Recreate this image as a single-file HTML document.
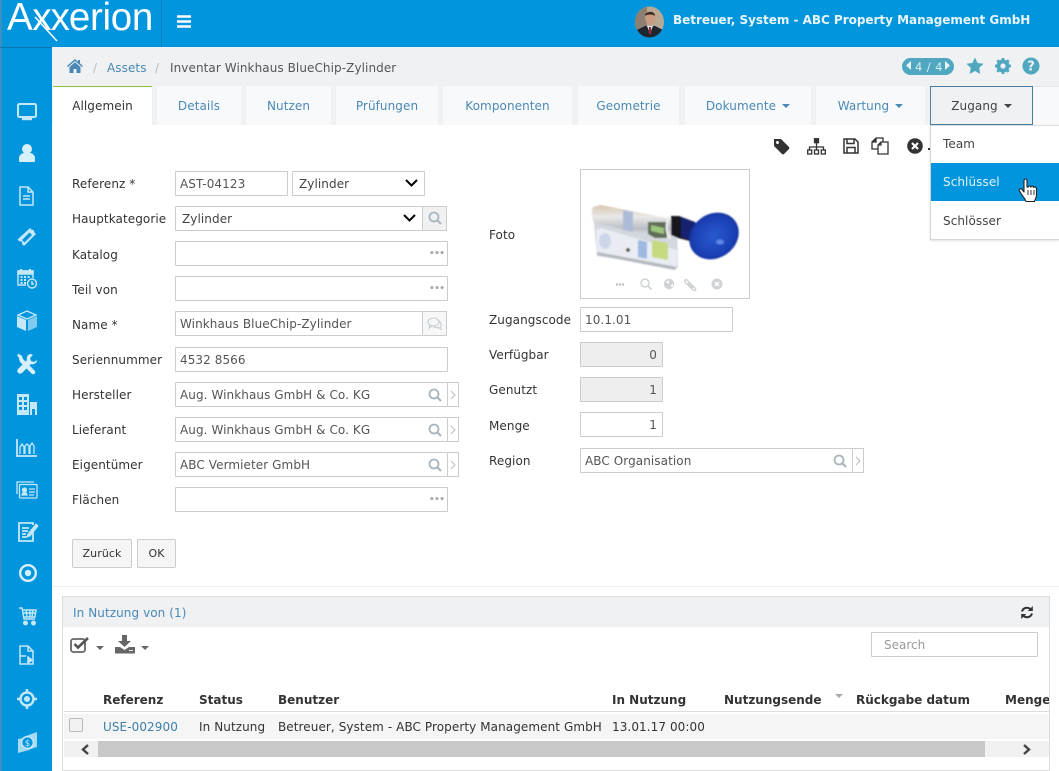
<!DOCTYPE html>
<html lang="de"><head><meta charset="utf-8"><title>Axxerion</title>
<style>
*{box-sizing:border-box}
html,body{margin:0;padding:0;width:1059px;height:771px;overflow:hidden;background:#fff;font:12px/16px "DejaVu Sans","Liberation Sans",sans-serif;color:#333;letter-spacing:.08px}
.a{position:absolute}
.t{position:absolute;white-space:nowrap}
.lb{position:absolute;white-space:nowrap;left:72px;color:#333}
.in{position:absolute;height:25px;border:1px solid #ccc;background:#fff;color:#555;line-height:25px;padding-left:4px;white-space:nowrap;border-radius:1px}
.tab{position:absolute;top:86px;height:39px;background:#f8f9fa;color:#4a89b5;text-align:center;line-height:41px;white-space:nowrap}
.car{display:inline-block;width:0;height:0;border-left:4px solid transparent;border-right:4px solid transparent;border-top:4px solid currentColor;vertical-align:2px;margin-left:6px}
.add{position:absolute;background:#fff;border:1px solid #ccc;border-left:0;height:25px}
.btn{position:absolute;top:539px;height:29px;background:#f5f5f5;border:1px solid #ccc;border-radius:2px;text-align:center;line-height:28px;color:#333;font-size:11px}
svg{position:absolute;display:block}
.th{position:absolute;top:692px;font-weight:bold;color:#333;white-space:nowrap;letter-spacing:0}
.td{position:absolute;top:719px;color:#333;white-space:nowrap}
</style></head><body>

<!-- sidebar + topbar -->
<div class="a" style="left:0;top:0;width:1059px;height:47px;background:#0095dd"></div>
<div class="a" style="left:0;top:0;width:52px;height:771px;background:#0095dd"></div>
<div class="a" style="left:0;top:0;width:2px;height:771px;background:#3f8fc0"></div>
<div class="a" style="left:0;top:47px;width:52px;height:1px;background:#0a77b2"></div>
<div class="a" style="left:161px;top:0;width:1px;height:47px;background:#0a7fbd"></div>

<!-- logo -->
<div class="t" style="left:7px;top:-7px;font:300 38.500px/50px 'Liberation Sans',sans-serif;color:#fff;letter-spacing:-.3px">A<span style="letter-spacing:-1px">xx</span>erion</div>
<svg style="left:30px;top:15px" width="30" height="28" viewBox="0 0 30 28"><path d="M5 2L27 26" stroke="#fff" stroke-width="1.500" fill="none"/></svg>

<!-- hamburger -->
<svg style="left:177px;top:15px" width="15" height="14" viewBox="0 0 15 14"><path d="M0 1.500h14M0 6.500h14M0 11.500h14" stroke="#fff" stroke-width="2.400"/></svg>

<!-- avatar -->
<svg style="left:635px;top:6px" width="30" height="32" viewBox="0 0 30 32">
<defs><clipPath id="av"><ellipse cx="14.500" cy="16" rx="14.500" ry="15.500"/></clipPath></defs>
<g clip-path="url(#av)"><rect width="30" height="32" fill="#b9a894"/><rect x="0" width="12" height="32" fill="#8d8073"/>
<path d="M2 32V24l8-4h10l8 4v8z" fill="#1c2530"/><path d="M12 20h6l-3 8z" fill="#e9e6e4"/><path d="M14 21h2l.5 6-1.500 2-1.500-2z" fill="#8a2f3a"/>
<ellipse cx="15" cy="12" rx="5" ry="6.500" fill="#c99b80"/><path d="M10 10c0-5 10-6 10 0-2-2-8-2-10 0z" fill="#3a2a20"/></g></svg>
<div class="t" style="left:673px;top:12px;font-weight:bold;color:#e8f5fc;letter-spacing:-.02px">Betreuer, System - ABC Property Management GmbH</div>

<!-- sidebar icons -->
<svg style="left:16px;top:102px" width="22" height="20" viewBox="0 0 22 20" fill="none" stroke="#c4e8f8"><rect x="2" y="2" width="18" height="13" rx="1.500" stroke-width="2"/><path d="M6 17h10" stroke-width="2.400"/></svg>
<svg style="left:17px;top:143px" width="20" height="20" viewBox="0 0 20 20" fill="#d5effb"><circle cx="10" cy="6" r="5"/><path d="M2 18v-3c0-3 3-5 5-5h6c2 0 5 2 5 5v3c0 .5-.5 1-1 1H3c-.5 0-1-.5-1-1z"/></svg>
<svg style="left:18px;top:186px" width="18" height="20" viewBox="0 0 18 20" fill="none" stroke="#c4e8f8" stroke-width="1.500"><path d="M2 1h8l5 5v13H2zM10 1v5h5M5 10h7M5 13h7"/></svg>
<svg style="left:16px;top:226px" width="22" height="22" viewBox="0 0 22 22" fill="#c4e8f8"><path d="M14 2l2 2c1-.8 2.800 1 2 2l2 2L8 20l-2-2c.8-1.500-1-3.300-2.500-2.500L1.500 13.500zM13.500 6.500L6 14l2.500 2.500L16 9z" fill-rule="evenodd"/></svg>
<svg style="left:16px;top:267px" width="23" height="23" viewBox="0 0 23 23" fill="none" stroke="#c4e8f8" stroke-width="1.400"><path d="M2 4h15v7M2 4v14h8"/><path d="M2 4h15v3H2z" fill="#c4e8f8"/><path d="M5 2v3M14 2v3" stroke-width="2"/><path d="M4.500 10h2m1.500 0h2m1.500 0h2M4.500 13h2m1.500 0h2M4.500 16h2m1.500 0h2" stroke-width="2"/><circle cx="16" cy="16.500" r="4.500"/><path d="M16 14v3h2"/></svg>
<svg style="left:16px;top:310px" width="22" height="22" viewBox="0 0 22 22" fill="#c4e8f8"><path d="M11 1l9 4-9 4-9-4z" fill="none" stroke="#c4e8f8" stroke-width="1.300"/><path d="M1 6l9 4v11l-9-4z"/><path d="M12 10l9-4v11l-9 4z" fill="#7fcbee"/></svg>
<svg style="left:16px;top:353px" width="22" height="22" viewBox="0 0 22 22" fill="#d5effb"><path d="M3 5L1 2l2-1 3 2 1 3 12 12c1 2-1 4-3 3L4 9 3 6z"/><path d="M15 1c-3 0-5 3-4 6L2 16c-2 3 1 6 4 4l9-9c3 1 6-1 6-4l-3 2-3-1-1-3 3-3z"/></svg>
<svg style="left:16px;top:393px" width="22" height="23" viewBox="0 0 22 23"><path d="M1 1h12v21H1z" fill="#c4e8f8"/><path d="M3 4h3v3H3zM8 4h3v3H8zM3 9h3v3H3zM8 9h3v3H8zM3 14h3v3H3zM8 14h3v3H8z" fill="#0095dd"/><path d="M14 9h7v13h-2v-6h-3v6h-2z" fill="#c4e8f8"/></svg>
<svg style="left:16px;top:438px" width="22" height="20" viewBox="0 0 22 20" fill="none" stroke="#c4e8f8" stroke-width="1.300"><path d="M1 1v17h20" stroke-width="1.800"/><path d="M4 16V9l2-3 2 3v7M9 16V8l2-2 2 2v8M14 16V8l2-3 2 3v8"/></svg>
<svg style="left:16px;top:480px" width="22" height="20" viewBox="0 0 22 20" fill="none" stroke="#c4e8f8" stroke-width="1.300"><path d="M1 14V2h17"/><rect x="3.500" y="4.500" width="17.500" height="13.500" rx="1"/><circle cx="8.500" cy="10" r="2" fill="#c4e8f8"/><path d="M6 15c0-3 5-3 5 0z" fill="#c4e8f8"/><path d="M13 9h6M13 12h6M13 15h5"/></svg>
<svg style="left:17px;top:521px" width="22" height="22" viewBox="0 0 22 22" fill="none" stroke="#c4e8f8" stroke-width="1.800"><path d="M16 9v11H2V2h14v2M5 7h7M5 10h6M5 13h4M5 16h5"/><path d="M19 3l-8 10-1 3 3-1 8-10z" fill="#c4e8f8" stroke-width="1"/></svg>
<svg style="left:18px;top:563px" width="20" height="20" viewBox="0 0 20 20" fill="none"><circle cx="10" cy="10" r="7.800" stroke="#d5effb" stroke-width="2.400"/><circle cx="10" cy="10" r="3.200" fill="#d5effb"/></svg>
<svg style="left:18px;top:606px" width="20" height="20" viewBox="0 0 20 20" fill="none" stroke="#c4e8f8" stroke-width="1.400"><path d="M1 2h3l2 11h11M5 4h13l-1 7H6M8 4l1 7M12 4v7M15 4l-1 7M5 7h13"/><circle cx="7.500" cy="17" r="1.800" fill="#c4e8f8"/><circle cx="15.500" cy="17" r="1.800" fill="#c4e8f8"/></svg>
<svg style="left:18px;top:645px" width="18" height="21" viewBox="0 0 18 21" fill="none" stroke="#c4e8f8" stroke-width="1.500"><path d="M2 1h8l5 5v13H2zM10 1v5h5M2 11h6"/><path d="M10 12l4 3-4 3z" fill="#c4e8f8"/></svg>
<svg style="left:16px;top:688px" width="22" height="22" viewBox="0 0 22 22" fill="none" stroke="#c4e8f8"><circle cx="11" cy="11" r="6.500" stroke-width="2.400"/><circle cx="11" cy="11" r="2.500" fill="#c4e8f8"/><path d="M11 1v4M11 17v4M1 11h4M17 11h4" stroke-width="2.400"/></svg>
<svg style="left:17px;top:731px" width="21" height="22" viewBox="0 0 21 22"><path d="M1 8l5-1 0-1L20 1v15l-6 2-2 1-11 3z" fill="#c4e8f8" opacity=".85"/><circle cx="10.500" cy="11.500" r="5.800" fill="#0095dd" stroke="#c4e8f8" stroke-width="1.300"/><text x="10.500" y="15" text-anchor="middle" font-size="9" font-family="DejaVu Sans" fill="#c4e8f8">$</text></svg>

<!-- breadcrumb -->
<div class="a" style="left:52px;top:47px;width:1007px;height:39px;background:#eff1f3"></div>
<svg style="left:67px;top:59px" width="16" height="14" viewBox="0 0 16 14" fill="#4a89b5"><path d="M8 0L0 7l1 1 7-6 7 6 1-1-3-2.600V1h-2v1.800z"/><path d="M2.500 8L8 3.300 13.500 8v6H9.500v-4h-3v4H2.500z"/></svg>
<div class="t" style="left:93px;top:60px;color:#bbb">/</div>
<div class="t" style="left:107px;top:60px;color:#4a89b5">Assets</div>
<div class="t" style="left:155px;top:60px;color:#bbb">/</div>
<div class="t" style="left:170px;top:60px;color:#555">Inventar Winkhaus BlueChip-Zylinder</div>
<div class="a" style="left:902px;top:58px;width:52px;height:17px;background:#50a7c0;border-radius:9px"></div>
<div class="t" style="left:915px;top:59px;color:#d9eef4;font-size:11.500px;letter-spacing:.4px">4 / 4</div>
<svg style="left:905px;top:60px" width="46" height="12" viewBox="0 0 46 12" fill="#e8f5f9"><path d="M6 1v9L1 5.500zM40 1v9l5-4.500z"/></svg>
<svg style="left:966px;top:57px" width="18" height="18" viewBox="0 0 18 18" fill="#50a7c0"><path d="M9 .5l2.600 5.500 6 .8-4.400 4.100 1.100 6L9 14l-5.300 2.900 1.100-6L.4 6.800l6-.8z"/></svg>
<svg style="left:994px;top:57px" width="18" height="18" viewBox="0 0 18 18"><circle cx="9" cy="9" r="6.500" fill="#50a7c0"/><path d="M9 1v16M1 9h16M3.300 3.300l11.400 11.400M14.700 3.300L3.300 14.700" stroke="#50a7c0" stroke-width="2.800"/><circle cx="9" cy="9" r="2.600" fill="#eff1f3"/></svg>
<svg style="left:1022px;top:57px" width="18" height="18" viewBox="0 0 18 18"><circle cx="9" cy="9" r="8.500" fill="#50a7c0"/><text x="9" y="13.500" text-anchor="middle" font-size="13" font-weight="bold" font-family="DejaVu Sans" fill="#eff1f3">?</text></svg>

<!-- tabs -->
<div class="a" style="left:52px;top:86px;width:1007px;height:39px;background:#eff1f3"></div>
<div class="a" style="left:1033px;top:86px;width:26px;height:39px;background:#f8f9fa;border-top:1px solid #e4e7ea"></div>
<div class="tab" style="left:53px;width:99px;background:#fff;color:#333;border-top:1px solid #8cc63f;line-height:39px">Allgemein</div>
<div class="tab" style="left:157px;width:84px">Details</div>
<div class="tab" style="left:246px;width:85px">Nutzen</div>
<div class="tab" style="left:336px;width:102px">Prüfungen</div>
<div class="tab" style="left:443px;width:129px">Komponenten</div>
<div class="tab" style="left:578px;width:101px">Geometrie</div>
<div class="tab" style="left:685px;width:126px">Dokumente<span class="car"></span></div>
<div class="tab" style="left:816px;width:109px">Wartung<span class="car"></span></div>
<div class="tab" style="left:930px;width:103px;background:#eff1f3;border:1px solid #4a7fa5;color:#444;line-height:39px">Zugang<span class="car"></span></div>

<!-- toolbar icons -->
<svg style="left:773px;top:138px" width="17" height="17" viewBox="0 0 17 17" fill="#333"><path d="M1 1h7l8 8a1.500 1.500 0 0 1 0 2l-5 5a1.500 1.500 0 0 1-2 0L1 8zM4.500 3A1.500 1.500 0 1 0 4.500 6 1.500 1.500 0 0 0 4.500 3z" fill-rule="evenodd"/></svg>
<svg style="left:807px;top:138px" width="19" height="17" viewBox="0 0 19 17" fill="none" stroke="#333" stroke-width="1.300"><rect x="7.500" y=".7" width="4" height="4" fill="#333"/><path d="M9.500 5v4M2.500 12V9h14v3M9.500 9v3"/><rect x=".7" y="12" width="4" height="4"/><rect x="7.500" y="12" width="4" height="4"/><rect x="14.300" y="12" width="4" height="4"/></svg>
<svg style="left:843px;top:138px" width="16" height="16" viewBox="0 0 16 16" fill="none" stroke="#333" stroke-width="1.500"><path d="M1 1h11l3 3v11H1z"/><path d="M4 1v4.500h7V1M4 15V9.500h8V15"/></svg>
<svg style="left:871px;top:137px" width="19" height="18" viewBox="0 0 19 18" fill="none" stroke="#333" stroke-width="1.300"><path d="M7 12H1V5l4-4h7v4"/><path d="M5 1v4H1" fill="#333"/><path d="M7 17V8l3-3h7v12zM10 5v3H7" /></svg>
<svg style="left:907px;top:138px" width="16" height="16" viewBox="0 0 16 16"><circle cx="8" cy="8" r="7.800" fill="#333"/><path d="M5 5l6 6M11 5l-6 6" stroke="#fff" stroke-width="2.200"/></svg>
<div class="a" style="left:928px;top:148px;border-top:2px solid #333;width:2px"></div>

<!-- dropdown -->
<div class="a" style="left:930px;top:125px;width:129px;height:115px;background:#fff;border:1px solid #d5d5d5;border-top:1px solid #ddd;border-right:0;box-shadow:0 1px 2px rgba(0,0,0,.12)"></div>
<div class="t" style="left:943px;top:136px;color:#444">Team</div>
<div class="a" style="left:931px;top:163px;width:128px;height:38px;background:#0095dd"></div>
<div class="t" style="left:943px;top:174px;color:#e3f4fc">Schlüssel</div>
<div class="t" style="left:943px;top:213px;color:#444">Schlösser</div>
<svg style="left:1017px;top:178px" width="22" height="25" viewBox="0 0 22 25"><path d="M7 2.500c0-2 3-2 3 0V9l1 .2c0-1.600 2.600-1.600 2.800 0 .2-1.400 2.700-1.400 2.900.3.500-1 2.800-.8 2.800 1V17c0 3-1.500 4-2 6.500H9c-.5-2-2-3.500-4-6.500l-2.500-4c-1-2 1.500-3 2.500-1.500L7 14z" fill="#fff" stroke="#222" stroke-width="1.100" stroke-linejoin="round"/><path d="M11 12v5M14 12v5M17 12v5" stroke="#222" stroke-width=".9"/></svg>

<!-- form left -->
<div class="lb" style="top:176px">Referenz *</div>
<div class="in" style="left:175px;top:171px;width:113px">AST-04123</div>
<div class="in" style="left:292px;top:171px;width:133px;padding-left:6px;color:#444">Zylinder</div>
<svg style="left:405px;top:179px" width="13" height="9" viewBox="0 0 13 9"><path d="M1 1l5.500 5.500L12 1" fill="none" stroke="#000" stroke-width="2"/></svg>

<div class="lb" style="top:211px">Hauptkategorie</div>
<div class="in" style="left:175px;top:206px;width:248px;padding-left:6px;color:#444">Zylinder</div>
<svg style="left:403px;top:214px" width="13" height="9" viewBox="0 0 13 9"><path d="M1 1l5.500 5.500L12 1" fill="none" stroke="#000" stroke-width="2"/></svg>
<div class="add" style="left:423px;top:206px;width:24px;background:#f1f1f1"></div>
<svg style="left:428px;top:211px" width="14" height="14" viewBox="0 0 14 14" fill="none" stroke="#a9b6be" stroke-width="1.800"><circle cx="6" cy="6" r="4.500"/><path d="M9 9l4 4" stroke-width="2.200"/></svg>

<div class="lb" style="top:247px">Katalog</div>
<div class="in" style="left:175px;top:241px;width:273px"></div>
<div class="t" style="left:429px;top:246px;color:#aaa;font-size:9px;font-weight:bold;letter-spacing:-.6px">•••</div>

<div class="lb" style="top:282px">Teil von</div>
<div class="in" style="left:175px;top:276px;width:273px"></div>
<div class="t" style="left:429px;top:281px;color:#aaa;font-size:9px;font-weight:bold;letter-spacing:-.6px">•••</div>

<div class="lb" style="top:317px">Name *</div>
<div class="in" style="left:175px;top:311px;width:248px">Winkhaus BlueChip-Zylinder</div>
<div class="add" style="left:423px;top:311px;width:24px;background:#f7f7f7"></div>
<svg style="left:427px;top:317px" width="16" height="13" viewBox="0 0 16 13" fill="none" stroke="#c5ced3" stroke-width="1.100"><ellipse cx="6.500" cy="5" rx="5.500" ry="4"/><path d="M3 8l-1 3 3-2M11 4c3 .5 4.500 4 2 6l1 2-3-1.500c-2 .5-3.500 0-4.500-1"/></svg>

<div class="lb" style="top:352px">Seriennummer</div>
<div class="in" style="left:175px;top:347px;width:273px">4532 8566</div>

<div class="lb" style="top:387px">Hersteller</div>
<div class="in" style="left:175px;top:382px;width:273px">Aug. Winkhaus GmbH &amp; Co. KG</div>
<div class="add" style="left:448px;top:382px;width:11px"></div>
<svg style="left:428px;top:388px" width="14" height="14" viewBox="0 0 14 14" fill="none" stroke="#a9b6be" stroke-width="1.800"><circle cx="6" cy="6" r="4.500"/><path d="M9 9l4 4" stroke-width="2.200"/></svg>
<svg style="left:450px;top:390px" width="6" height="10" viewBox="0 0 6 10"><path d="M1 1l4 4-4 4" fill="none" stroke="#bbb"/></svg>

<div class="lb" style="top:422px">Lieferant</div>
<div class="in" style="left:175px;top:417px;width:273px">Aug. Winkhaus GmbH &amp; Co. KG</div>
<div class="add" style="left:448px;top:417px;width:11px"></div>
<svg style="left:428px;top:423px" width="14" height="14" viewBox="0 0 14 14" fill="none" stroke="#a9b6be" stroke-width="1.800"><circle cx="6" cy="6" r="4.500"/><path d="M9 9l4 4" stroke-width="2.200"/></svg>
<svg style="left:450px;top:425px" width="6" height="10" viewBox="0 0 6 10"><path d="M1 1l4 4-4 4" fill="none" stroke="#bbb"/></svg>

<div class="lb" style="top:457px">Eigentümer</div>
<div class="in" style="left:175px;top:452px;width:273px">ABC Vermieter GmbH</div>
<div class="add" style="left:448px;top:452px;width:11px"></div>
<svg style="left:428px;top:458px" width="14" height="14" viewBox="0 0 14 14" fill="none" stroke="#a9b6be" stroke-width="1.800"><circle cx="6" cy="6" r="4.500"/><path d="M9 9l4 4" stroke-width="2.200"/></svg>
<svg style="left:450px;top:460px" width="6" height="10" viewBox="0 0 6 10"><path d="M1 1l4 4-4 4" fill="none" stroke="#bbb"/></svg>

<div class="lb" style="top:492px">Flächen</div>
<div class="in" style="left:175px;top:487px;width:273px"></div>
<div class="t" style="left:429px;top:492px;color:#aaa;font-size:9px;font-weight:bold;letter-spacing:-.6px">•••</div>

<div class="btn" style="left:72px;width:60px">Zurück</div>
<div class="btn" style="left:137px;width:39px">OK</div>

<!-- photo -->
<div class="a" style="left:580px;top:169px;width:170px;height:130px;border:1px solid #ccc;background:#fff"></div>
<svg style="left:581px;top:170px" width="168" height="128" viewBox="0 0 168 128">
<defs><filter id="bl"><feGaussianBlur stdDeviation=".7"/></filter>
<linearGradient id="me" x1="0" y1="0" x2="0" y2="1"><stop offset="0" stop-color="#d9c5ae"/><stop offset=".35" stop-color="#e9e9e9"/><stop offset=".7" stop-color="#b9bdc2"/><stop offset="1" stop-color="#f2f2f2"/></linearGradient>
<radialGradient id="bk" cx=".5" cy=".5" r=".6"><stop offset="0" stop-color="#2a5ad0"/><stop offset=".7" stop-color="#1b3fb4"/><stop offset="1" stop-color="#0f2a8a"/></radialGradient></defs>
<g filter="url(#bl)">
<path d="M12 37L96 50 97 98 16 86 13 55z" fill="#d3d7de"/>
<path d="M12 37c-2 5-1 12 1 16l76 16 7-19-76-15z" fill="url(#me)"/>
<path d="M15 60l1 22 80 15 0-17-76-22z" fill="#e9ecf2"/>
<path d="M96 97l-80-15 0 3 78 15 2-3z" fill="#b4b8bf"/>
<ellipse cx="24" cy="71" rx="6" ry="8" fill="#cdd6e8"/>
<path d="M42 40l10 2v20l-10-2z" fill="#aebbd8"/>
<path d="M57 70l9 2v17l-9-2z" fill="#9eb8e2"/>
<path d="M71 70l16 3v17l-16-3z" fill="#c6da82"/>
<path d="M67 52l19 0v16l-12 0-7-4z" fill="#5f6d58"/>
<path d="M70 55l13 3v6l-13-3z" fill="#9cc57c"/>
<path d="M88 46c-3 7-3 15 0 22" stroke="#f0f0f0" stroke-width="2" fill="none"/>
<path d="M90 46l8 0 16 6-1 20-16-4-7-3z" fill="#14161f"/>
<path d="M100 47l18 7-2 18-16-5z" fill="#15246f"/>
<ellipse cx="133" cy="66" rx="26" ry="22" transform="rotate(-35 133 66)" fill="url(#bk)"/>
<ellipse cx="139" cy="72" rx="4" ry="2.500" fill="#5b87e6"/>
<circle cx="47" cy="80" r="2" fill="#555"/>
</g>
</svg>
<svg style="left:615px;top:276px" width="110" height="16" viewBox="0 0 110 16" fill="#cfd3d6" stroke="none">
<path d="M1 7.500h2v2H1zM4 7.500h2v2H4zM7 7.500h2v2H7z" fill="#bbb"/>
<circle cx="30" cy="7" r="4" fill="none" stroke="#cfd3d6" stroke-width="1.500"/><path d="M33 10l3.500 3.500" stroke="#cfd3d6" stroke-width="1.800"/>
<circle cx="54" cy="8" r="5.200"/><path d="M51 6l3-2v4zM55 10l3-2v3z" fill="#fff"/>
<path d="M72 4l8 8c2 2-1 3-2 2l-8-8c-1-2 1-3 2-2zM73 7l5 5" fill="none" stroke="#cfd3d6" stroke-width="1.500"/>
<circle cx="102" cy="8" r="5.500"/><path d="M100 6l4 4M104 6l-4 4" stroke="#fff" stroke-width="1.400"/>
</svg>

<!-- form right -->
<div class="t" style="left:489px;top:227px">Foto</div>
<div class="t" style="left:489px;top:312px">Zugangscode</div>
<div class="in" style="left:580px;top:307px;width:153px">10.1.01</div>
<div class="t" style="left:489px;top:347px">Verfügbar</div>
<div class="in" style="left:580px;top:342px;width:83px;background:#eee;text-align:right;padding:0 5px;line-height:24px">0</div>
<div class="t" style="left:489px;top:382px">Genutzt</div>
<div class="in" style="left:580px;top:377px;width:83px;background:#eee;text-align:right;padding:0 5px">1</div>
<div class="t" style="left:489px;top:418px">Menge</div>
<div class="in" style="left:580px;top:412px;width:83px;text-align:right;padding:0 5px">1</div>
<div class="t" style="left:489px;top:453px">Region</div>
<div class="in" style="left:580px;top:448px;width:273px">ABC Organisation</div>
<div class="add" style="left:853px;top:448px;width:11px"></div>
<svg style="left:833px;top:454px" width="14" height="14" viewBox="0 0 14 14" fill="none" stroke="#a9b6be" stroke-width="1.800"><circle cx="6" cy="6" r="4.500"/><path d="M9 9l4 4" stroke-width="2.200"/></svg>
<svg style="left:855px;top:456px" width="6" height="10" viewBox="0 0 6 10"><path d="M1 1l4 4-4 4" fill="none" stroke="#bbb"/></svg>

<!-- separator -->
<div class="a" style="left:52px;top:586px;width:1007px;height:1px;background:#eee"></div>

<!-- panel -->
<div class="a" style="left:62px;top:596px;width:988px;height:175px;border:1px solid #ddd;border-bottom:0;background:#fff"></div>
<div class="a" style="left:62px;top:770px;width:988px;height:1px;background:#ddd"></div>
<div class="a" style="left:63px;top:597px;width:986px;height:30px;background:#eff1f3"></div>
<div class="t" style="left:73px;top:605px;color:#4a89b5">In Nutzung von (1)</div>
<svg style="left:1020px;top:605px" width="14" height="15" viewBox="0 0 14 15" fill="none" stroke="#333" stroke-width="2"><path d="M2 6.500C3 3 7 1.500 10.500 4"/><path d="M12 8.500C11 12 7 13.500 3.500 11"/><path d="M12.800 1v5h-5z" fill="#333" stroke="none"/><path d="M1.200 14V9h5z" fill="#333" stroke="none"/></svg>

<svg style="left:70px;top:636px" width="20" height="17" viewBox="0 0 20 17"><rect x="1" y="3" width="14" height="13" rx="2.500" fill="none" stroke="#666" stroke-width="1.800"/><path d="M4.500 8l3.500 3.500L18 2" fill="none" stroke="#555" stroke-width="2.600"/></svg>
<div class="a" style="left:96px;top:646px;border-left:4px solid transparent;border-right:4px solid transparent;border-top:4px solid #666"></div>
<svg style="left:115px;top:635px" width="20" height="19" viewBox="0 0 20 19" fill="#666"><path d="M7 0h5v6h4l-6.500 6L3 6h4z"/><path d="M0 12h5l4.500 3 4.500-3h6v6.500H0z"/><path d="M14 15.500h4" stroke="#eee"/></svg>
<div class="a" style="left:141px;top:646px;border-left:4px solid transparent;border-right:4px solid transparent;border-top:4px solid #666"></div>
<div class="in" style="left:871px;top:632px;width:167px;color:#999;padding-left:12px;line-height:25px;letter-spacing:0">Search</div>

<div class="th" style="left:103px">Referenz</div>
<div class="th" style="left:199px">Status</div>
<div class="th" style="left:278px">Benutzer</div>
<div class="th" style="left:612px">In Nutzung</div>
<div class="th" style="left:724px">Nutzungsende</div>
<div class="a" style="left:835px;top:694px;border-left:4px solid transparent;border-right:4px solid transparent;border-top:4px solid #aaa"></div>
<div class="th" style="left:856px">Rückgabe datum</div>
<div class="th" style="left:1005px;width:44px;overflow:hidden">Menge</div>

<div class="a" style="left:64px;top:711px;width:985px;height:1px;background:#ddd"></div>
<div class="a" style="left:64px;top:714px;width:985px;height:25px;background:#f5f5f5"></div>
<div class="a" style="left:69px;top:718px;width:14px;height:14px;border:1px solid #bbb;border-radius:2px;background:#f2f2f2"></div>
<div class="td" style="left:103px;color:#3d7fa8">USE-002900</div>
<div class="td" style="left:199px">In Nutzung</div>
<div class="td" style="left:278px">Betreuer, System - ABC Property Management GmbH</div>
<div class="td" style="left:612px">13.01.17 00:00</div>

<!-- scrollbar -->
<div class="a" style="left:64px;top:741px;width:985px;height:16px;background:#f1f1f1"></div>
<div class="a" style="left:98px;top:741px;width:887px;height:16px;background:#c8c8c8"></div>
<svg style="left:80px;top:744px" width="10" height="11" viewBox="0 0 10 11"><path d="M8 1L3 5.500 8 10" fill="none" stroke="#444" stroke-width="2.400"/></svg>
<svg style="left:1022px;top:744px" width="10" height="11" viewBox="0 0 10 11"><path d="M2 1l5 4.500L2 10" fill="none" stroke="#444" stroke-width="2.400"/></svg>

</body></html>
